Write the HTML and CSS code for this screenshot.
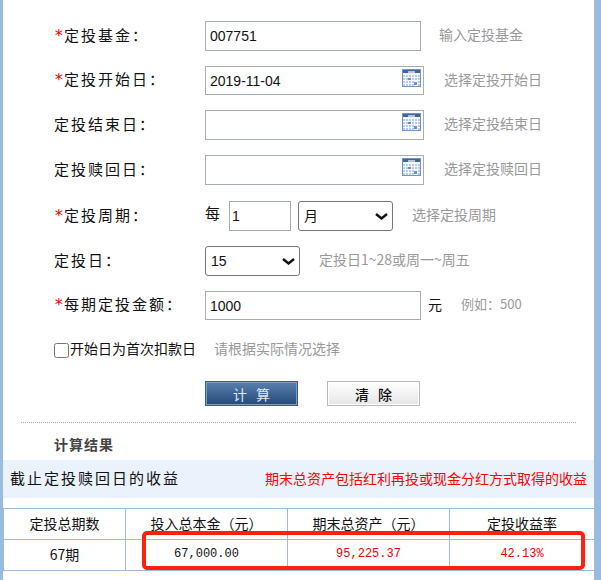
FILE: index.html
```html
<!DOCTYPE html>
<html>
<head>
    <title>定投计算器</title>
    <link rel="stylesheet" href="styles.css">
</head>
<body>
    <svg class="icon-defs" width="0" height="0">
        <symbol id="calendar" viewBox="0 0 19 18">
            <rect width="19" height="18" fill="#6f96c4"/>
            <rect x="1" y="1" width="17" height="3" fill="#3f659d"/>
            <rect x="6" y="2" width="7" height="2" fill="#b4c2d8"/>
            <rect x="1" y="4" width="17" height="1" fill="#f2f6fb"/>
            <rect x="1" y="5" width="17" height="12" fill="#f4f7fc"/>
            <path fill="#b7cbea" d="M1 6h2v2H1zM4 6h2v2H4zM7 6h2v2H7zM10 6h2v2h-2zM13 6h2v2h-2zM16 6h2v2h-2zM1 9h2v2H1zM4 9h2v2H4zM10 9h2v2h-2zM13 9h2v2h-2zM16 9h2v2h-2zM1 12h2v2H1zM4 12h2v2H4zM7 12h2v2H7zM10 12h2v2h-2zM16 12h2v2h-2zM1 15h2v2H1zM4 15h2v2H4zM7 15h2v2H7zM10 15h2v2h-2zM16 15h2v2h-2z"/>
            <path fill="#6f8fc4" d="M6 9h3v2H6zM12 13h3v3h-3z"/>
        </symbol>
        <symbol id="chevron" viewBox="0 0 13 7">
            <path d="M1 1l5.5 4.5L12 1" fill="none" stroke="#111" stroke-width="2.4"/>
        </symbol>
    </svg>

    <form class="calc-form">
        <div class="form-row">
            <label class="field-label"><span class="required">*</span>定投基金：</label>
            <input class="text-input" type="text" value="007751">
            <span class="hint hint-fund">输入定投基金</span>
        </div>

        <div class="form-row form-row-short">
            <label class="field-label"><span class="required">*</span>定投开始日：</label>
            <div class="date-field">
                <input class="text-input date-input" type="text" value="2019-11-04">
                <svg class="date-icon"><use href="#calendar"/></svg>
            </div>
            <span class="hint hint-date">选择定投开始日</span>
        </div>

        <div class="form-row">
            <label class="field-label">定投结束日：</label>
            <div class="date-field">
                <input class="text-input date-input" type="text">
                <svg class="date-icon"><use href="#calendar"/></svg>
            </div>
            <span class="hint hint-date">选择定投结束日</span>
        </div>

        <div class="form-row">
            <label class="field-label">定投赎回日：</label>
            <div class="date-field">
                <input class="text-input date-input" type="text">
                <svg class="date-icon"><use href="#calendar"/></svg>
            </div>
            <span class="hint hint-date">选择定投赎回日</span>
        </div>

        <div class="form-row form-row-period">
            <label class="field-label"><span class="required">*</span>定投周期：</label>
            <span class="every">每</span>
            <input class="text-input period-input" type="text" value="1">
            <div class="select-field period-select">
                <select class="select-box">
                    <option>月</option>
                </select>
                <svg class="select-arrow"><use href="#chevron"/></svg>
            </div>
            <span class="hint hint-period">选择定投周期</span>
        </div>

        <div class="form-row">
            <label class="field-label">定投日：</label>
            <div class="select-field">
                <select class="select-box">
                    <option>15</option>
                </select>
                <svg class="select-arrow"><use href="#chevron"/></svg>
            </div>
            <span class="hint hint-day">定投日1~28或周一~周五</span>
        </div>

        <div class="form-row form-row-short">
            <label class="field-label"><span class="required">*</span>每期定投金额：</label>
            <input class="text-input" type="text" value="1000">
            <span class="unit">元</span>
            <span class="hint hint-amount">例如：500</span>
        </div>

        <div class="form-row">
            <label class="check-label"><input class="check-box" type="checkbox"><span class="check-text">开始日为首次扣款日</span></label>
            <span class="hint hint-check">请根据实际情况选择</span>
        </div>

        <div class="button-row">
            <button class="btn btn-calc" type="button">计 算</button>
            <button class="btn btn-clear" type="button">清 除</button>
        </div>
    </form>

    <div class="divider"></div>

    <h3 class="result-title">计算结果</h3>

    <div class="result-band">
        <span class="band-title">截止定投赎回日的收益</span>
        <span class="band-note">期末总资产包括红利再投或现金分红方式取得的收益</span>
    </div>

    <div class="result-wrap">
        <table class="result-table">
            <tr>
                <th class="col-periods">定投总期数</th>
                <th class="col-money">投入总本金（元）</th>
                <th class="col-money">期末总资产（元）</th>
                <th>定投收益率</th>
            </tr>
            <tr>
                <td>67期</td>
                <td class="mono">67,000.00</td>
                <td class="mono gain">95,225.37</td>
                <td class="mono gain">42.13%</td>
            </tr>
        </table>
        <!-- red marker drawn over the result row -->
        <div class="marker"></div>
    </div>
</body>
</html>
```

FILE: styles.css
```css
html, body {
    margin: 0;
    padding: 0;
}

body {
    box-sizing: border-box;
    width: 601px;
    height: 580px;
    overflow: hidden;
    border-left: 3px solid #99bbe0;
    border-right: 7px solid #99bbe0;
    background: #fff;
    font-family: "Noto Sans CJK SC", sans-serif;
    font-size: 14px;
    color: #111;
}

.icon-defs {
    display: block;
}

.calc-form {
    padding: 21px 0 0 51px;
}

.form-row {
    display: flex;
    align-items: center;
    height: 30px;
    margin-bottom: 15px;
}

.form-row-short {
    height: 29px;
}

.form-row-period {
    margin-top: 16px;
}

.field-label {
    width: 151px;
    flex: none;
    margin-bottom: 4px;
    font-size: 15px;
    letter-spacing: 2px;
    white-space: nowrap;
}

.required {
    display: inline-block;
    width: 10px;
    color: #f00;
    font-family: "DejaVu Sans Mono", monospace;
    font-size: 16px;
    letter-spacing: 0;
}

.text-input {
    box-sizing: border-box;
    width: 216px;
    height: 100%;
    padding: 0 4px;
    border: 1px solid #a6adb5;
    border-radius: 0;
    background: #fff;
    color: #111;
    font-family: "Liberation Sans", sans-serif;
    font-size: 14px;
    outline: none;
}

.date-field {
    position: relative;
    width: 219px;
    height: 100%;
}

.date-input {
    width: 100%;
}

.date-icon {
    position: absolute;
    top: 3px;
    right: 3px;
    width: 19px;
    height: 18px;
}

.every {
    width: 24px;
    margin-top: -8px;
    font-size: 15px;
}

.period-input {
    width: 62px;
    padding-left: 2px;
}

.select-field {
    position: relative;
    width: 95px;
    height: 30px;
}

.select-box {
    appearance: none;
    box-sizing: border-box;
    width: 100%;
    height: 100%;
    padding: 0 0 0 5px;
    border: 1px solid #767676;
    border-radius: 3px;
    background: #fff;
    color: #111;
    font-family: "Liberation Sans", "Noto Sans CJK SC", sans-serif;
    font-size: 14px;
}

.select-arrow {
    position: absolute;
    top: 12px;
    right: 5px;
    width: 13px;
    height: 7px;
}

.period-select {
    margin-left: 7px;
}

.hint {
    margin-bottom: 4px;
    color: #999;
    white-space: nowrap;
}

.hint-fund {
    margin-left: 18px;
}

.hint-date {
    margin-left: 20px;
}

.hint-period {
    margin-left: 19px;
}

.hint-day {
    margin-left: 19px;
}

.unit {
    margin-left: 7px;
    margin-bottom: 4px;
}

.hint-amount {
    margin-left: 19px;
    font-size: 13px;
}

.check-label {
    display: flex;
    align-items: center;
    width: 160px;
    flex: none;
}

.check-box {
    width: 15px;
    height: 15px;
    margin: 0 1px 0 0;
}

.check-text {
    margin-bottom: 4px;
}

.button-row {
    display: flex;
    gap: 29px;
    margin: 16px 0 0 151px;
}

.btn {
    box-sizing: border-box;
    width: 93px;
    height: 25px;
    padding: 0;
    font-family: "Noto Sans CJK SC", sans-serif;
    font-size: 14px;
    line-height: 20px;
    word-spacing: 6px;
}

.btn-calc {
    border: 1px solid #1d6a94;
    box-shadow: inset 0 0 0 1px #7f9cc0;
    background: linear-gradient(#5a80ad, #23497a);
    color: #dfe8f2;
}

.btn-clear {
    border: 1px solid #b9b9b9;
    box-shadow: inset 0 0 0 1px #fff;
    background: linear-gradient(#fff, #e6e6e6);
    color: #111;
    font-weight: 500;
}

.divider {
    height: 0;
    margin: 16px 18px 0;
    border-top: 1px dotted #aaa;
}

.result-title {
    height: 37px;
    margin: 0;
    padding-left: 51px;
    font-size: 14px;
    font-weight: bold;
    letter-spacing: 1px;
    line-height: 43px;
    color: #444;
}

.result-band {
    display: flex;
    justify-content: space-between;
    align-items: center;
    height: 38px;
    padding: 0 7px;
    background: #eaf3fc;
}

.band-title {
    margin-bottom: 4px;
    font-size: 15px;
    letter-spacing: 2px;
}

.band-note {
    margin-bottom: 2px;
    color: #f00;
    font-size: 14px;
    white-space: nowrap;
}

.result-wrap {
    position: relative;
    margin-top: 10px;
}

.result-table {
    width: 591px;
    border-collapse: collapse;
    table-layout: fixed;
}

.result-table th,
.result-table td {
    box-sizing: border-box;
    height: 31px;
    padding: 0 0 2px;
    border: 1px solid #9dbcdc;
    text-align: center;
    font-size: 14px;
    font-weight: normal;
}

.result-table tr > :last-child {
    border-right: 0;
}

.result-table .col-periods {
    width: 122px;
}

.result-table .col-money {
    width: 162px;
}

.mono {
    font-family: "Liberation Mono", monospace;
    font-size: 12px !important;
}

.gain {
    color: #e00;
}

.marker {
    position: absolute;
    left: 139px;
    top: 23px;
    box-sizing: border-box;
    width: 443px;
    height: 39px;
    border: 4px solid #ff2010;
    border-radius: 5px;
}
```
